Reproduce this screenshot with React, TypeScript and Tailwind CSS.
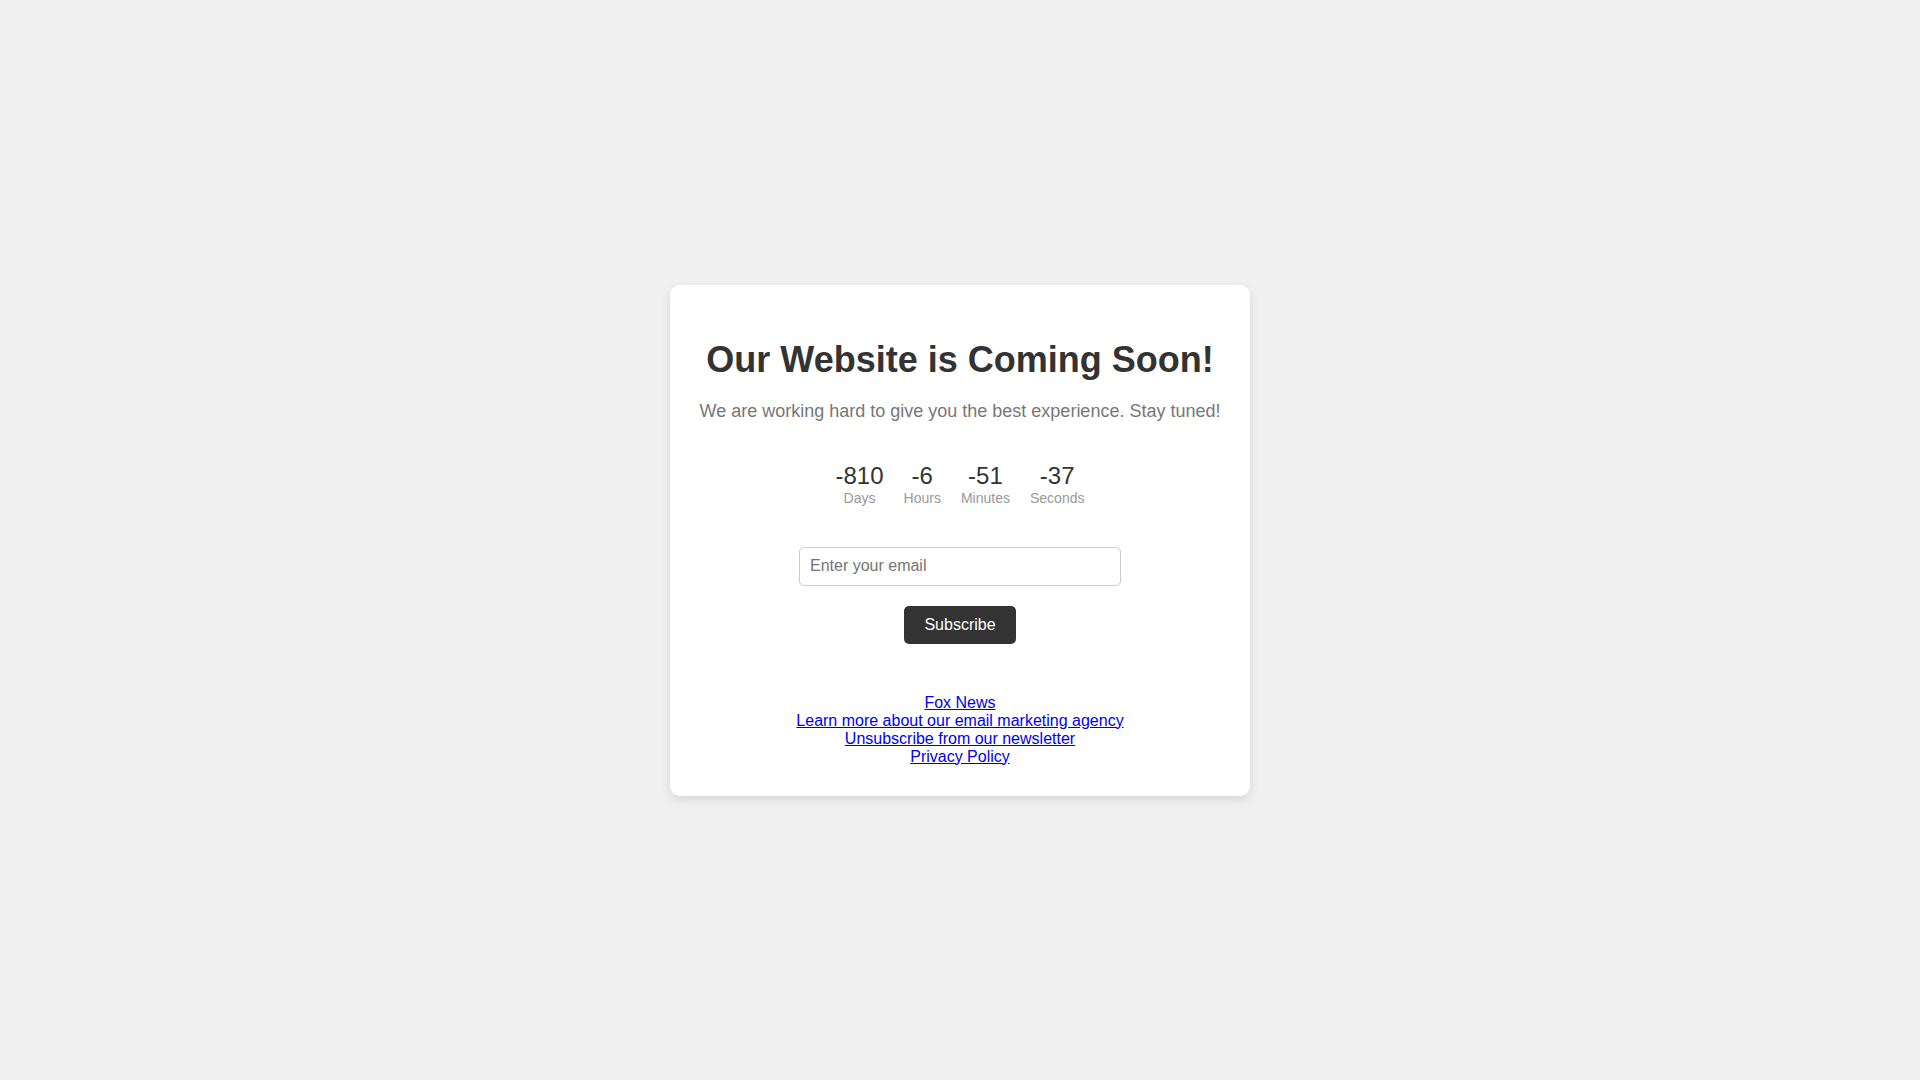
import { useState } from 'react';

type Unit = {
  value: number;
  label: string;
};

const units: Unit[] = [
  { value: -810, label: 'Days' },
  { value: -6, label: 'Hours' },
  { value: -51, label: 'Minutes' },
  { value: -37, label: 'Seconds' },
];

const links = [
  'Fox News',
  'Learn more about our email marketing agency',
  'Unsubscribe from our newsletter',
  'Privacy Policy',
];

export default function App() {
  const [email, setEmail] = useState('');

  return (
    <div className="flex min-h-screen items-center justify-center bg-[#f0f0f0] font-['Liberation_Sans',Arial,sans-serif] leading-[normal]">
      <div className="rounded-[10px] bg-white p-[30px] text-center shadow-[0_4px_10px_rgba(0,0,0,0.1)]">
        <h1 className="mt-[24px] text-[36px] font-bold leading-[normal] text-[#333]">Our Website is Coming Soon!</h1>
        <p className="mt-[20px] text-[18px] leading-[normal] text-[#777]">
          We are working hard to give you the best experience. Stay tuned!
        </p>

        <div className="mt-[40px] flex justify-center gap-[20px]">
          {units.map((unit) => (
            <div key={unit.label} className="flex flex-col items-center">
              <span className="text-[24px] leading-[normal] text-[#333]">{unit.value}</span>
              <span className="text-[14px] leading-[normal] text-[#999]">{unit.label}</span>
            </div>
          ))}
        </div>

        <form
          className="mt-[41px] flex flex-col items-center"
          onSubmit={(e) => {
            e.preventDefault();
          }}
        >
          <input
            type="email"
            value={email}
            onChange={(e) => setEmail(e.target.value)}
            placeholder="Enter your email"
            className="h-[39px] w-[322px] rounded-[5px] border border-[#ccc] px-[10px] text-[16px] text-[#333] outline-none placeholder:text-[#757575]"
          />
          <button
            type="submit"
            className="mt-[20px] h-[38px] rounded-[5px] bg-[#333] px-[20px] text-[16px] leading-[normal] text-white"
          >
            Subscribe
          </button>
        </form>

        <div className="mt-[50px] flex flex-col items-center text-[16px] leading-[normal]">
          {links.map((label) => (
            <a key={label} href="#" className="text-[#0000ee] underline">
              {label}
            </a>
          ))}
        </div>
      </div>
    </div>
  );
}
